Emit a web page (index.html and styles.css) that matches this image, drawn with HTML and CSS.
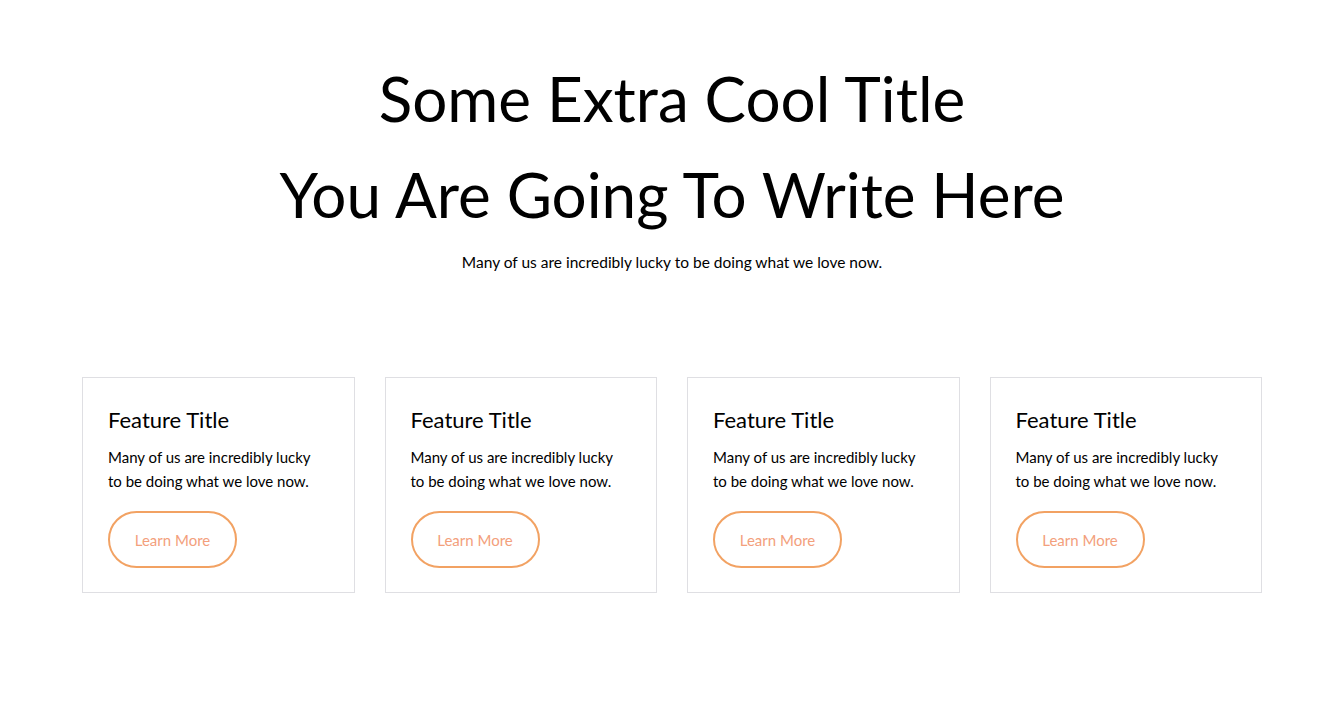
FILE: index.html
```html
<!DOCTYPE html>
<html lang="en">
<head>
<meta charset="utf-8">
<title>Features</title>
<link rel="stylesheet" href="styles.css">
</head>
<body>
<section class="hero">
  <h1 class="hero-title">Some Extra Cool Title<br>You Are Going To Write Here</h1>
  <p class="hero-sub">Many of us are incredibly lucky to be doing what we love now.</p>
</section>
<section class="features">
  <div class="card">
    <h2 class="card-title">Feature Title</h2>
    <p class="card-text">Many of us are incredibly lucky to be doing what we love now.</p>
    <a class="btn" href="#">Learn More</a>
  </div>
  <div class="card">
    <h2 class="card-title">Feature Title</h2>
    <p class="card-text">Many of us are incredibly lucky to be doing what we love now.</p>
    <a class="btn" href="#">Learn More</a>
  </div>
  <div class="card">
    <h2 class="card-title">Feature Title</h2>
    <p class="card-text">Many of us are incredibly lucky to be doing what we love now.</p>
    <a class="btn" href="#">Learn More</a>
  </div>
  <div class="card">
    <h2 class="card-title">Feature Title</h2>
    <p class="card-text">Many of us are incredibly lucky to be doing what we love now.</p>
    <a class="btn" href="#">Learn More</a>
  </div>
</section>
</body>
</html>
```
FILE: styles.css
```css
* { box-sizing: border-box; }
html, body { margin: 0; padding: 0; background: #fff; }
body {
  font-family: "Lato", "Liberation Sans", sans-serif;
  color: #000;
}
.hero {
  padding-top: 50px;
  text-align: center;
}
.hero-title {
  margin: 0;
  font-weight: 400;
  font-size: 62px;
  line-height: 96px;
}
.hero-sub {
  margin: 8px 0 0;
  font-size: 15.5px;
  line-height: 24px;
}
.features {
  width: 1180px;
  margin: 103px auto 0;
  display: grid;
  grid-template-columns: repeat(4, 1fr);
  gap: 30px;
}
.card {
  border: 1px solid #dfdfe3;
  padding: 26px 25px 24px;
  height: 216px;
}
.card-title {
  margin: 0;
  font-weight: 400;
  font-size: 22px;
  line-height: 32px;
}
.card-text {
  max-width: 214px;
  margin: 9px 0 18px;
  font-size: 15px;
  line-height: 24px;
}
.btn {
  display: inline-flex;
  align-items: center;
  justify-content: center;
  width: 129px;
  height: 57px;
  border: 2px solid #f2a263;
  border-radius: 30px;
  color: #f3a07c;
  font-size: 15px;
  text-decoration: none;
}
```
